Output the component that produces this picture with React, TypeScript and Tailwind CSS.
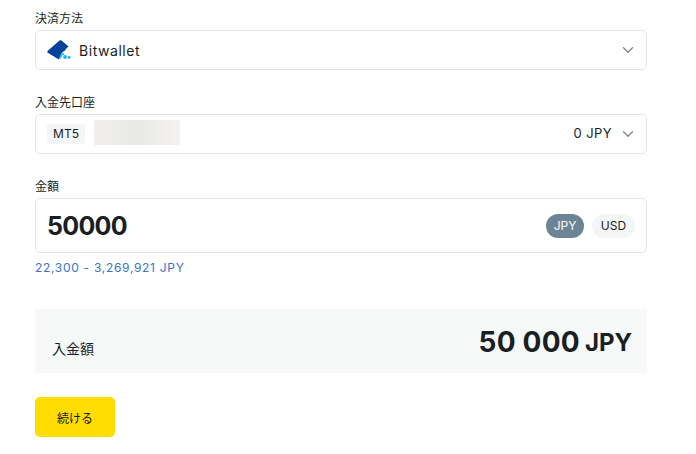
import { ChevronDown } from 'lucide-react'

const font = "font-['Inter','Noto_Sans_CJK_JP',sans-serif]"

function BitwalletLogo() {
  return (
    <svg width="24" height="20" viewBox="0 0 24 20">
      <path d="M0.5 11 L12.5 0.5 Q13.5 -0.2 14.5 0.6 L21.5 6.5 Q19 8.5 17.5 11 Q14 12 12.5 18.5 Q12 19.6 11 19 L0.8 12.8 Q0 12 0.5 11 Z" fill="#06429b" />
      <path d="M13 18.5 Q13.8 14.5 17 13.5" stroke="#2bb8e8" strokeWidth="1.6" fill="none" />
      <circle cx="18" cy="17" r="1.9" fill="#22b8ea" />
      <circle cx="22" cy="17.2" r="1.5" fill="#22b8ea" />
    </svg>
  )
}

function Field({ label, children, className }: { label: string; children: React.ReactNode; className: string }) {
  return (
    <div>
      <p className="text-xs leading-[18px] mb-[2px] text-[#1a1f23]">{label}</p>
      <div className={`flex items-center border border-[#e3e5e6] rounded-[5px] bg-white ${className}`}>{children}</div>
    </div>
  )
}

export default function App() {
  return (
    <div className={`${font} w-[696px] h-[454px] bg-white pl-[35px] pr-[49px] pt-[10px] text-[#1a1f23] overflow-hidden`}>
      <Field label="決済方法" className="h-10 pl-[11px] pr-[9px]">
        <BitwalletLogo />
        <span className="ml-[8px] text-sm tracking-[0.55px] mt-[2px]">Bitwallet</span>
        <ChevronDown size={18} strokeWidth={1.6} className="ml-auto text-[#7b8085]" />
      </Field>

      <div className="mt-6">
        <Field label="入金先口座" className="h-10 pl-[11px] pr-[9px]">
          <span className="bg-[#f4f5f7] rounded-[3px] w-[38px] h-5 flex items-center justify-center text-xs">MT5</span>
          <div className="ml-[9px] mb-[4px] w-[86px] h-[25px] bg-[linear-gradient(90deg,#f1efee,#e9e9e8_50%,#f4f3f2)]" />
          <span className="ml-auto text-[13px] tracking-[0.4px]">0 JPY</span>
          <ChevronDown size={18} strokeWidth={1.6} className="ml-[7px] text-[#7b8085]" />
        </Field>
      </div>

      <div className="mt-6">
        <Field label="金額" className="h-[55px] pl-[11px] pr-[11px]">
          <span className="text-[25px] font-bold tracking-[-0.7px] mt-[2px]">50000</span>
          <span className="ml-auto bg-[#6c8494] text-white text-xs rounded-full w-[38px] h-6 flex items-center justify-center">JPY</span>
          <span className="ml-2 bg-[#f4f5f7] text-xs rounded-full w-[43px] h-6 flex items-center justify-center">USD</span>
        </Field>
      </div>
      <p className="mt-[6px] text-xs leading-[18px] tracking-[0.7px] text-[#3b73c4]">22,300 - 3,269,921 JPY</p>

      <div className="mt-[32px] h-16 bg-[#f7f9f9] flex items-center pl-[17px] pr-[15px]">
        <span className="text-sm mt-4">入金額</span>
        <span className="ml-auto text-[28px] font-bold leading-none tracking-[0.2px] mt-[1px]">50 000</span>
        <span className="ml-[5px] text-2xl font-bold leading-none mt-[3px]">JPY</span>
      </div>

      <button className="mt-6 w-20 h-10 bg-[#ffdd00] rounded-[5px] text-xs text-[#141400] pt-[3px] flex items-center justify-center">続ける</button>
    </div>
  )
}
